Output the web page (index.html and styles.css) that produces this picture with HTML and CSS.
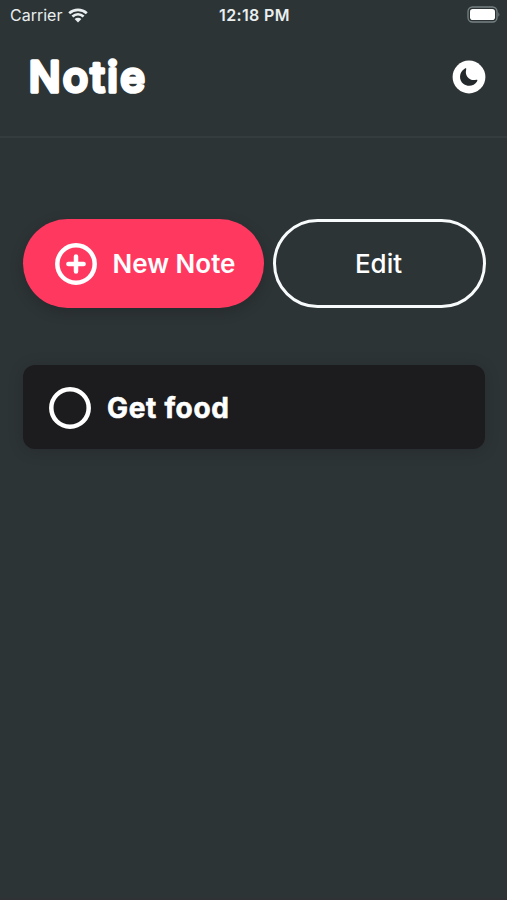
FILE: index.html
```html
<!DOCTYPE html>
<html lang="en">
<head>
    <meta charset="UTF-8">
    <meta name="viewport" content="width=device-width, initial-scale=1.0">
    <title>Notie</title>
    <link rel="stylesheet" href="styles.css">
</head>
<body>
    <div class="status-bar">
        <div class="carrier">
            <span>Carrier</span>
            <svg class="wifi" viewBox="0 0 20 15">
                <path d="M1.2 5.2C6.2 .7 13.8 .7 18.8 5.2M4.4 8.6C7.7 5.7 12.3 5.7 15.6 8.6" fill="none" stroke="currentColor" stroke-width="2.7"/>
                <path d="M6.6 11.1C8.6 9.4 11.4 9.4 13.4 11.1L10 14.6Z" fill="currentColor"/>
            </svg>
        </div>
        <div class="time">12:18 PM</div>
        <svg class="battery" viewBox="0 0 34 18">
            <rect x="1" y="1" width="29" height="15" rx="4.5" fill="none" stroke="#778083" stroke-width="1.3"/>
            <rect x="3" y="3" width="25" height="11" rx="2.8" fill="#fff"/>
            <path d="M31.4 6.2Q33.4 8.5 31.4 10.8Z" fill="#778083"/>
        </svg>
    </div>

    <header class="header">
        <h1>
            <svg class="logo" viewBox="0 0 140 60">
                <text x="0.7" y="45.3">Notie</text>
            </svg>
        </h1>
        <button class="theme-toggle" aria-label="Toggle theme">
            <svg viewBox="0 0 34 34">
                <circle cx="17" cy="17" r="16.4" fill="#fff"/>
                <path d="M12.6 8.7C14.2 7.9 14.5 8.6 14.1 10C12.6 15.8 17.4 21 23.3 20C25.2 19.5 25.9 19.9 25 21.5C22.5 26 16 27.3 11.6 24.1C6.5 20.1 6.9 12 12.6 8.7Z" fill="#24292b"/>
            </svg>
        </button>
    </header>

    <main class="content">
        <div class="actions">
            <button class="btn btn-new">
                <svg class="circle-icon" viewBox="0 0 42 42">
                    <circle cx="21" cy="21" r="18.7"/>
                    <path d="M21 13.4V28.6M13.4 21H28.6"/>
                </svg>
                <span>New Note</span>
            </button>
            <button class="btn btn-edit">Edit</button>
        </div>

        <div class="note">
            <svg class="circle-icon" viewBox="0 0 42 42">
                <circle cx="21" cy="21" r="18.7"/>
            </svg>
            <span class="note-title">Get food</span>
        </div>
    </main>
</body>
</html>
```

FILE: styles.css
```css
* {
    margin: 0;
    padding: 0;
    box-sizing: border-box;
}

body {
    height: 100vh;
    font-family: Inter, sans-serif;
    background: #2d3436;
    color: #fff;
    border-bottom: 2px solid #303134;
    overflow: hidden;
}

button {
    font-family: inherit;
    color: inherit;
    background: none;
    border: none;
    cursor: pointer;
}

svg {
    display: block;
}

.status-bar {
    display: grid;
    grid-template-columns: 1fr auto 1fr;
    align-items: center;
    height: 30px;
    padding: 0 6px 0 10px;
    color: #e9eeef;
    font-size: 16px;
}

.carrier {
    display: flex;
    align-items: center;
    gap: 6px;
}

.wifi {
    width: 20px;
    height: 15px;
}

.time {
    font-weight: 600;
    font-size: 16px;
    letter-spacing: 0.35px;
    padding-right: 2px;
}

.battery {
    width: 34px;
    height: 18px;
    justify-self: end;
}

.header {
    display: flex;
    align-items: center;
    justify-content: space-between;
    height: 108px;
    padding: 0 21px 13px 28px;
    border-bottom: 2px solid #353c3e;
}

.logo {
    width: 140px;
    height: 60px;
    font-size: 42px;
    font-weight: 500;
    letter-spacing: 2.4px;
    fill: #fff;
    stroke: #fff;
    stroke-width: 3.6px;
    stroke-linejoin: round;
    overflow: visible;
}

.theme-toggle svg {
    width: 34px;
    height: 34px;
}

.content {
    padding: 81px 21px 0 23px;
}

.actions {
    display: flex;
    gap: 9px;
}

.btn {
    display: flex;
    align-items: center;
    justify-content: center;
    height: 89px;
    border-radius: 45px;
    font-size: 26px;
    font-weight: 600;
}

.btn-new {
    width: 241px;
    gap: 16px;
    padding-left: 3px;
    background: #ff3860;
    box-shadow: 0 4px 14px rgba(0, 0, 0, 0.18);
}

.btn-edit {
    flex: 1;
    padding-right: 2px;
    border: 3px solid #f8fbfc;
    font-weight: 500;
}

.circle-icon {
    width: 42px;
    height: 42px;
    fill: none;
    stroke: #fff;
    stroke-width: 4.5;
    stroke-linecap: round;
}

.note {
    display: flex;
    align-items: center;
    gap: 16px;
    height: 84px;
    margin: 57px 1px 0 0;
    padding: 2px 26px 0;
    border-radius: 12px;
    background: #1c1c1e;
    box-shadow: 0 2px 16px rgba(0, 0, 0, 0.15);
}

.note-title {
    font-size: 28px;
    font-weight: 700;
    letter-spacing: 0.7px;
    -webkit-text-stroke: 0.6px #fff;
}
```
